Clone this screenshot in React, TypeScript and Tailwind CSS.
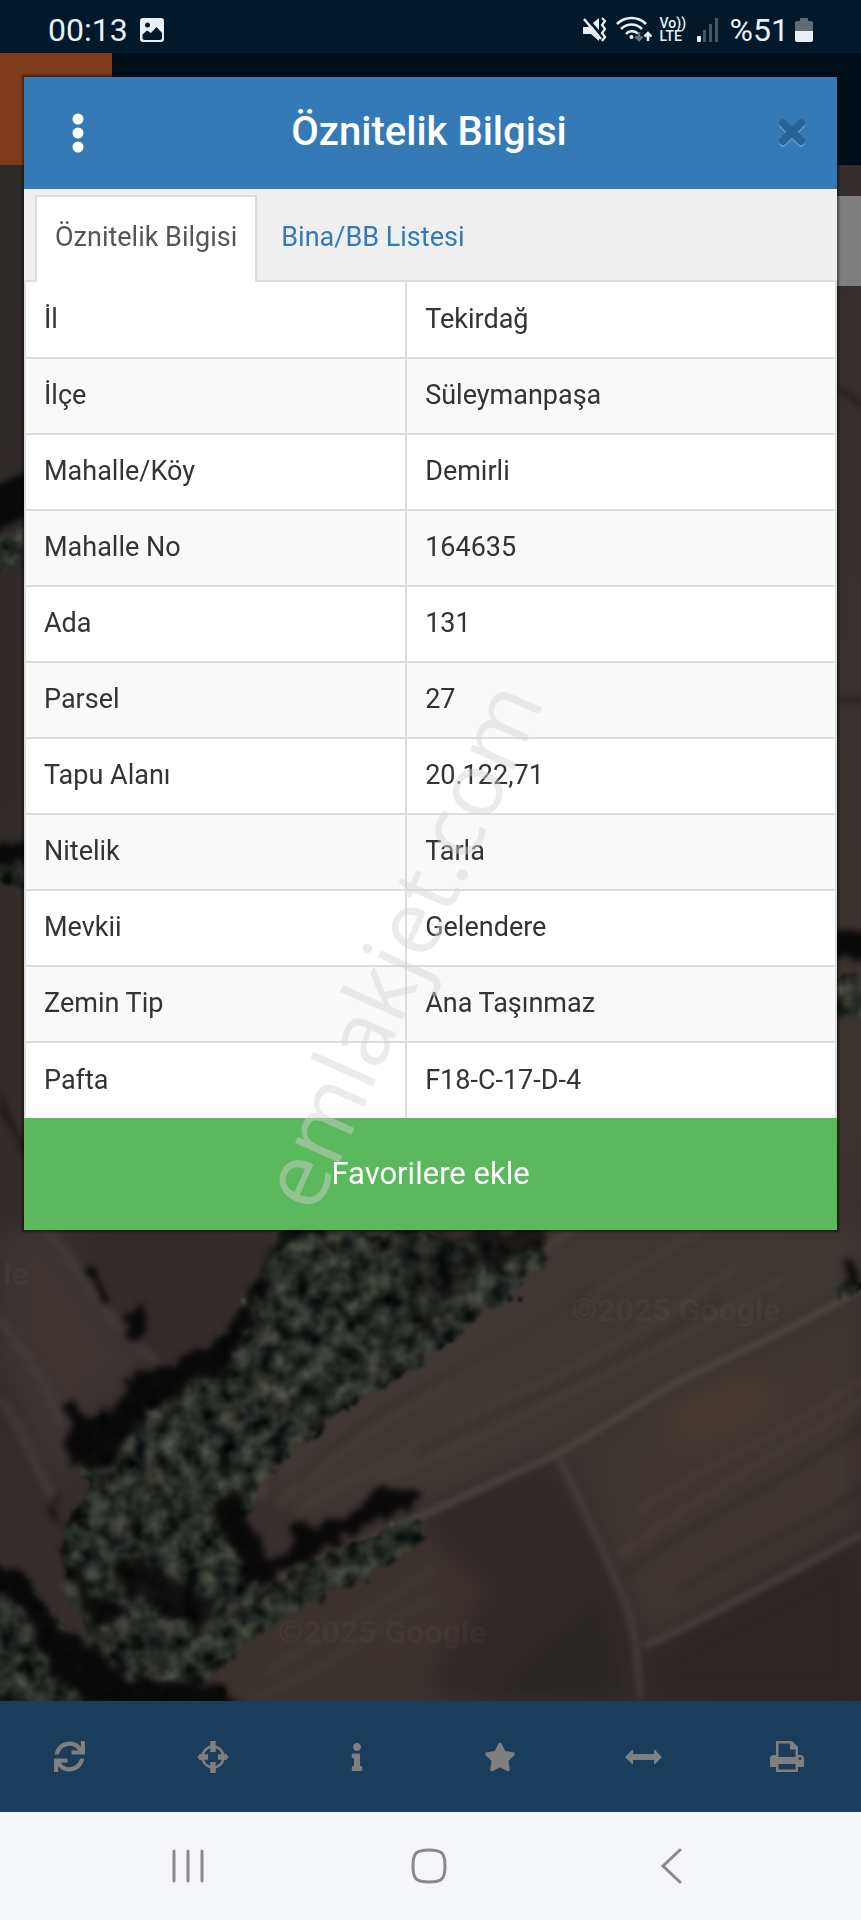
import React from "react";
import { FaSync, FaInfo, FaStar } from "react-icons/fa";

const rows: [string, string][] = [
  ["İl", "Tekirdağ"],
  ["İlçe", "Süleymanpaşa"],
  ["Mahalle/Köy", "Demirli"],
  ["Mahalle No", "164635"],
  ["Ada", "131"],
  ["Parsel", "27"],
  ["Tapu Alanı", "20.122,71"],
  ["Nitelik", "Tarla"],
  ["Mevkii", "Gelendere"],
  ["Zemin Tip", "Ana Taşınmaz"],
  ["Pafta", "F18-C-17-D-4"],
];

function StatusBar() {
  return (
    <header className="flex h-[53px] items-center justify-between bg-[#02192b] pl-12 pr-12 pt-1.5 text-[#e6f0f6]">
      <div className="flex items-center gap-3">
        <time className="text-[32px] leading-8">00:13</time>
        <svg width="24" height="24" viewBox="0 0 24 24" aria-hidden="true">
          <rect width="24" height="24" rx="3" fill="currentColor" />
          <circle cx="7.500" cy="7" r="2.500" fill="#02192b" />
          <path d="M2.500 20v-3.500l4.500-4 4 2.500 5.500-6 5.500 6V20a2 2 0 0 1-2 2h-15.500a2 2 0 0 1-2-2z" fill="#02192b" />
        </svg>
      </div>
      <div className="flex items-center gap-2">
        <svg width="26" height="26" viewBox="0 0 26 26" fill="none" stroke="currentColor" aria-hidden="true">
          <path d="M1 10h5L17 1v23l-8-7H1z" fill="currentColor" stroke="none" />
          <path d="M4 0l15 18" stroke="#02192b" strokeWidth="3" />
          <path d="M2 2l17 20" strokeWidth="2.500" />
          <path d="M20 1l3 3-3 4 3 4-3 4 3 4-3 4" strokeWidth="2.200" />
        </svg>
        <svg width="36" height="28" viewBox="0 0 36 28" fill="none" stroke="currentColor" strokeWidth="2.600" aria-hidden="true">
          <path d="M1 8c8-8 21-8 29 0M5 13c6-6 15-6 21 0M10 18c3-3.500 8-3.500 12-.5" />
          <circle cx="15.500" cy="21" r="2" fill="currentColor" stroke="none" />
          <path d="M23 16v8m-3.500-3.500L23 24l3.500-3.500" stroke="#607482" />
          <path d="M32 25v-8m-3.500 3.500L32 17l3.500 3.500" />
        </svg>
        <div className="flex w-7 flex-col text-[14px] font-medium leading-[13px]">
          <span className="whitespace-nowrap">Vo))</span>
          <span>LTE</span>
        </div>
        <svg width="24" height="24" viewBox="0 0 24 24" aria-hidden="true">
          <rect x="1" y="18" width="4" height="6" rx="1" fill="currentColor" />
          <path d="M7 12h3v12H7zM13 6h3v18h-3zM19 0h3v24h-3z" fill="#435765" />
        </svg>
        <div className="flex items-center gap-1.5 pl-0.5">
          <span className="text-[32px] leading-8">%51</span>
          <svg width="18" height="26" viewBox="0 0 18 26" aria-hidden="true">
            <path d="M5 2a1 1 0 0 1 1-1h6a1 1 0 0 1 1 1v2h3a2 2 0 0 1 2 2v9H0V6a2 2 0 0 1 2-2h3z" fill="#5b6c78" />
            <path d="M0 14h18v9a2 2 0 0 1-2 2H2a2 2 0 0 1-2-2z" fill="currentColor" />
          </svg>
        </div>
      </div>
    </header>
  );
}

function SatelliteMap() {
  return (
    <svg
      className="absolute inset-0 h-full w-full"
      viewBox="0 165 861 1536"
      preserveAspectRatio="xMidYMin slice"
      aria-hidden="true"
    >
      <defs>
        <linearGradient id="ground" x1="0" y1="0" x2="1" y2="1">
          <stop offset="0" stopColor="#2d2926" />
          <stop offset="0.500" stopColor="#362e2c" />
          <stop offset="0.800" stopColor="#3b3330" />
          <stop offset="1" stopColor="#302727" />
        </linearGradient>
        <filter id="soft" x="-20%" y="-20%" width="140%" height="140%" colorInterpolationFilters="sRGB">
          <feGaussianBlur stdDeviation="12" />
        </filter>
        <filter id="line" x="-10%" y="-10%" width="120%" height="120%" colorInterpolationFilters="sRGB">
          <feGaussianBlur stdDeviation="3" />
        </filter>
        <filter id="trees" x="-5%" y="-5%" width="110%" height="110%" colorInterpolationFilters="sRGB">
          <feTurbulence type="fractalNoise" baseFrequency="0.055" numOctaves="3" seed="4" result="n" />
          <feColorMatrix
            in="n"
            type="matrix"
            values="0.460 0.040 0 0 -0.095  0.460 0 0 0 -0.060  0.400 0 0.040 0 -0.070  0 0 0 0 1"
            result="tex"
          />
          <feDisplacementMap in="SourceGraphic" in2="n" scale="26" xChannelSelector="R" yChannelSelector="G" result="edge" />
          <feComposite in="tex" in2="edge" operator="in" />
          <feGaussianBlur stdDeviation="1.600" />
        </filter>
        <filter id="shade" x="-10%" y="-10%" width="120%" height="120%" colorInterpolationFilters="sRGB">
          <feTurbulence type="fractalNoise" baseFrequency="0.060" numOctaves="2" seed="9" result="n" />
          <feDisplacementMap in="SourceGraphic" in2="n" scale="26" xChannelSelector="R" yChannelSelector="G" />
          <feGaussianBlur stdDeviation="3" />
        </filter>
      </defs>
      <rect x="0" y="165" width="861" height="1536" fill="url(#ground)" />

      <g filter="url(#soft)">
        <path d="M545 1230H861v60L681 1380 430 1500l-130 20-35-60 40-90 130-90z" fill="#3e3733" />
        <path d="M600 1440l261-140v220L650 1635 610 1540z" fill="#3e3531" />
        <path d="M660 1410l90-40 30 40-90 40z" fill="#463930" />
        <path d="M430 1510l120-50 60 100 30 100-90 41H440z" fill="#312828" />
        <path d="M130 1701l120-90 180-80 60 60-80 110z" fill="#3b322e" />
        <path d="M480 1701l120-110 30 110z" fill="#292522" />
        <path d="M650 1650l211-110v161H640z" fill="#2d2425" />
        <path d="M0 1230h60l90 140-60 40-30 80-60-130z" fill="#3d3432" />
        <path d="M70 1230h210l-60 90-70 50z" fill="#332b2b" />
      </g>

      <g filter="url(#line)" fill="none" strokeLinecap="round">
        <path d="M45 1230c40 40 55 90 110 130M0 1400c25 30 30 60 52 95M0 1320c30 40 45 60 60 100" stroke="#4c433f" strokeWidth="9" opacity=".45" />
        <path d="M861 1288c-70 44-120 62-180 92-60 34-90 56-132 78-80 34-180 85-270 120" stroke="#58514c" strokeWidth="4" />
        <path d="M560 1460c24 50 44 90 66 145 8 22 12 50 14 90" stroke="#45403c" strokeWidth="5" />
        <path d="M646 1645c48-20 80-40 120-60 40-20 60-32 95-50" stroke="#544c48" strokeWidth="4" />
        <path d="M262 1495c10-70 40-110 90-146 80-62 150-70 220-119" stroke="#4e453f" strokeWidth="9" opacity=".6" />
        <path d="M280 1505c60-70 200-140 420-275M300 1510c110-70 280-130 430-240M380 1480c100-40 240-110 400-200" stroke="#51463e" strokeWidth="10" opacity=".3" />
        <path d="M300 1480c80-90 190-110 290-190M420 1450c90-50 200-80 300-150" stroke="#292221" strokeWidth="10" opacity=".25" />
        <path d="M620 1555c80-60 140-90 241-155M640 1510c70-50 140-70 221-130" stroke="#5a4d44" strokeWidth="8" opacity=".22" />
        <path d="M628 1572c80-60 140-80 233-145M680 1590c60-40 120-60 181-100" stroke="#231c1b" strokeWidth="7" opacity=".25" />
        <path d="M270 1670c60-40 110-60 160-100M250 1700c80-30 120-70 180-100" stroke="#4d423c" strokeWidth="8" opacity=".25" />
        <path d="M0 1095c10 30 20 40 24 60M0 1110l40 60M837 390c10 0 18 10 24 16M837 700h24" stroke="#151110" strokeWidth="4" opacity=".7" />
      </g>

      <g filter="url(#trees)">
        <path d="M285 1222l-22 42-16 40-14 22-26 20-22 20-48 24-20 26h-30l-6 52 4 28-18 20-10 32 6 44 16 26 20 36 40 40 58-4 34-32 54-42 66-30 74-46-10-22-46 20-66 22-30 26-22-28-18-24 26-32 20-38 72-62 66-36 54-44 76-56v-18z" fill="#fff" />
        <path d="M-20 1560l46 14 30 46 32 22 38 38 88 2 26 40H-20zM-20 530h50v40h-50zM-20 858h50v26h-50zM826 975h60v44h-60zM836 1280h40v14h-40z" fill="#fff" />
      </g>

      <g filter="url(#shade)" fill="#050505">
        <path d="M292 1226l-32 40-16 40-14 20-24 18-24 14-50 22-20 34-24 4-18-18-4 62 38 10 34-50 50-40 34-10 30-54 18-60 40-30z" opacity=".9" />
        <path d="M234 1492l16 38 18 30 20-10 12-30 14 12 34-16 38-34 36 14-52 32-66 30-40 30-18-10-10-30-26-40z" opacity=".9" />
        <path d="M62 1530l10 34 20 28 24 10 4-20-8-22 24-10 44 40 36 6-14 30-40-14-40-24-6 40-28-8-20-50z" opacity=".75" />
        <path d="M50 1505l6-6 4 20-6 10z" opacity=".7" />
        <path d="M-6 1562l34 16 28 44 36 24 32 34 90 2 30 30H110l-60-40-20-60-36-20z" opacity=".9" />
        <path d="M390 1234l24 60-20 30 40-10 50-60-14-20z" opacity=".35" />
        <path d="M470 1234l70-10 6 20-50 26z" opacity=".6" />
        <path d="M-14 490l54-26v50l-54 20zM-14 846l54-8v22l-54 6zM828 930h50v30h-50zM842 1266l8 20 10 4-10-30zM86 1268l16 34 8 0-12-34zM132 1306l-6 34 14 2 6-20z" opacity=".9" />
      </g>

      <g className="font-['Roboto']" fill="#fff" fillOpacity=".03" fontSize="32" fontWeight="700">
        <text x="572" y="1321">©2025 Google</text>
        <text x="278" y="1643">©2025 Google</text>
        <text x="3" y="1285">le</text>
      </g>
    </svg>
  );
}

function CloseIcon() {
  return (
    <svg width="30" height="32" viewBox="0 0 30 32" fill="none" strokeLinecap="round" strokeWidth="8" aria-hidden="true">
      <path d="M6 8l18 18M24 8L6 26" stroke="#5e9bd3" />
      <path d="M6 6l18 18M24 6L6 24" stroke="#2a6293" />
    </svg>
  );
}

function AttributeDialog() {
  return (
    <section
      role="dialog"
      aria-labelledby="dialog-title"
      className="absolute inset-x-6 top-6 bg-white shadow-[0_0_2px_2px_rgba(0,0,0,0.4)]"
    >
      <div className="grid h-28 grid-cols-[30px_1fr_30px] items-center bg-[#337ab7] pl-[39px] pr-[30px]">
        <button type="button" aria-label="Menü" className="flex justify-center">
          <svg width="12" height="40" viewBox="0 0 12 40" fill="#fff" aria-hidden="true">
            <circle cx="6" cy="6" r="5.500" />
            <circle cx="6" cy="20" r="5.500" />
            <circle cx="6" cy="34" r="5.500" />
          </svg>
        </button>
        <h1 id="dialog-title" className="pb-0.5 pr-3 text-center text-[40px] font-medium leading-[48px] text-white">
          Öznitelik Bilgisi
        </h1>
        <button type="button" aria-label="Kapat">
          <CloseIcon />
        </button>
      </div>

      <div role="tablist" className="flex h-[93px] border-b-2 border-[#ddd] bg-[#efefef] pl-[11px] pt-1.5">
        <button
          type="button"
          role="tab"
          aria-selected="true"
          className="-mb-0.5 border-2 border-b-0 border-[#ddd] bg-white px-[18px] pb-1 text-[27px] text-[#555]"
        >
          Öznitelik Bilgisi
        </button>
        <button type="button" role="tab" aria-selected="false" className="px-6 pb-0.5 pt-0.5 text-[27px] text-[#337ab7]">
          Bina/BB Listesi
        </button>
      </div>

      <table className="w-full table-fixed border-x-2 border-[#ddd] text-left text-[27px] leading-9 text-[#333]">
        <colgroup>
          <col className="w-[47%]" />
          <col />
        </colgroup>
        <tbody>
          {rows.map(([label, value]) => (
            <tr key={label} className="h-[76px] border-b-2 border-[#ddd] even:bg-[#f9f9f9] last:border-b-0">
              <th scope="row" className="border-r-2 border-[#ddd] px-[18px] pb-0.5 font-normal">
                {label}
              </th>
              <td className="px-[18px] pb-0.5">{value}</td>
            </tr>
          ))}
        </tbody>
      </table>

      <button type="button" className="h-28 w-full bg-[#5cb85c] text-[31px] text-white">
        Favorilere ekle
      </button>
    </section>
  );
}

function TargetIcon() {
  return (
    <svg width="32" height="32" viewBox="0 0 32 32" fill="none" stroke="currentColor" aria-hidden="true">
      <circle cx="16" cy="16" r="10.500" strokeWidth="2.500" />
      <path d="M16 0v11M16 21v11M2 16h9M21 16h9" strokeWidth="5.500" />
      <path d="M4 12.500L0 16l4 3.500zM28 12.500l4 3.500-4 3.500z" fill="currentColor" stroke="none" />
    </svg>
  );
}

function WidthIcon() {
  return (
    <svg width="37" height="14" viewBox="0 0 37 14" fill="currentColor" aria-hidden="true">
      <path d="M0 7L7 0h1v4h21V0h1l7 7-7 7h-1v-4H8v4H7z" />
    </svg>
  );
}

function PrintIcon() {
  return (
    <svg width="34" height="32" viewBox="0 0 34 32" aria-hidden="true">
      <path
        fillRule="evenodd"
        fill="currentColor"
        d="M6 0h16l6 6v8h2a4 4 0 0 1 4 4v8h-6v5H6v-5H0v-8a4 4 0 0 1 4-4h2zM8.500 2.500V16h17V8.500H20v-6zM8.500 23v5.500h17V23zM30 16a1.500 1.500 0 1 0 0 3 1.500 1.500 0 0 0 0-3z"
      />
    </svg>
  );
}

function RefreshIcon() {
  return <FaSync className="size-[31px]" aria-hidden="true" />;
}

function Toolbar() {
  const tools = [
    { name: "Yenile", icon: <RefreshIcon /> },
    { name: "Konum", icon: <TargetIcon /> },
    { name: "Bilgi", icon: <FaInfo className="size-7" /> },
    { name: "Favoriler", icon: <FaStar className="size-8" /> },
    { name: "Ölçüm", icon: <WidthIcon /> },
    { name: "Yazdır", icon: <PrintIcon /> },
  ];
  return (
    <nav className="flex h-[111px] bg-[#1a3d5c] text-[#7f7f7f]">
      {tools.map(({ name, icon }) => (
        <button key={name} type="button" aria-label={name} className="flex flex-1 items-center justify-center pr-1">
          {icon}
        </button>
      ))}
    </nav>
  );
}

function SystemNav() {
  return (
    <nav className="flex h-[108px] items-center justify-around bg-[#f5f6f8] pl-[68px] pr-[70px] text-[#8a8a8c]">
      <button type="button" aria-label="Son uygulamalar">
        <svg width="34" height="36" viewBox="0 0 34 36" stroke="currentColor" strokeWidth="3" strokeLinecap="round" aria-hidden="true">
          <path d="M3 3v30M17 3v30M31 3v30" />
        </svg>
      </button>
      <button type="button" aria-label="Ana ekran">
        <svg width="36" height="36" viewBox="0 0 36 36" fill="none" stroke="currentColor" strokeWidth="3" aria-hidden="true">
          <path d="M18 2c13 0 16 3 16 16s-3 16-16 16S2 31 2 18 5 2 18 2z" />
        </svg>
      </button>
      <button type="button" aria-label="Geri">
        <svg width="34" height="36" viewBox="0 0 34 36" fill="none" stroke="currentColor" strokeWidth="3" strokeLinecap="round" aria-hidden="true">
          <path d="M26 2L9 18l17 16" />
        </svg>
      </button>
    </nav>
  );
}

export default function App() {
  return (
    <div className="flex min-h-screen flex-col bg-[#02192b] font-['Roboto',sans-serif]">
      <StatusBar />
      <main className="relative flex min-h-[1240px] grow flex-col">
        <div className="flex h-28 bg-[#000e1a]">
          <div className="w-28 bg-[#7f3a1c]" />
        </div>
        <div className="relative flex grow justify-end overflow-hidden pt-[31px]">
          <SatelliteMap />
          <div className="relative h-[90px] w-20 bg-[#7f7f7f]" />
        </div>
        <AttributeDialog />
        <p className="pointer-events-none absolute left-[398px] top-[891px] -translate-x-1/2 -translate-y-1/2 -rotate-[66deg] whitespace-nowrap font-['Open_Sans'] text-[90px] font-medium leading-none text-[#d2d2d2]/45">
          emlakjet.com
        </p>
      </main>
      <Toolbar />
      <SystemNav />
    </div>
  );
}
